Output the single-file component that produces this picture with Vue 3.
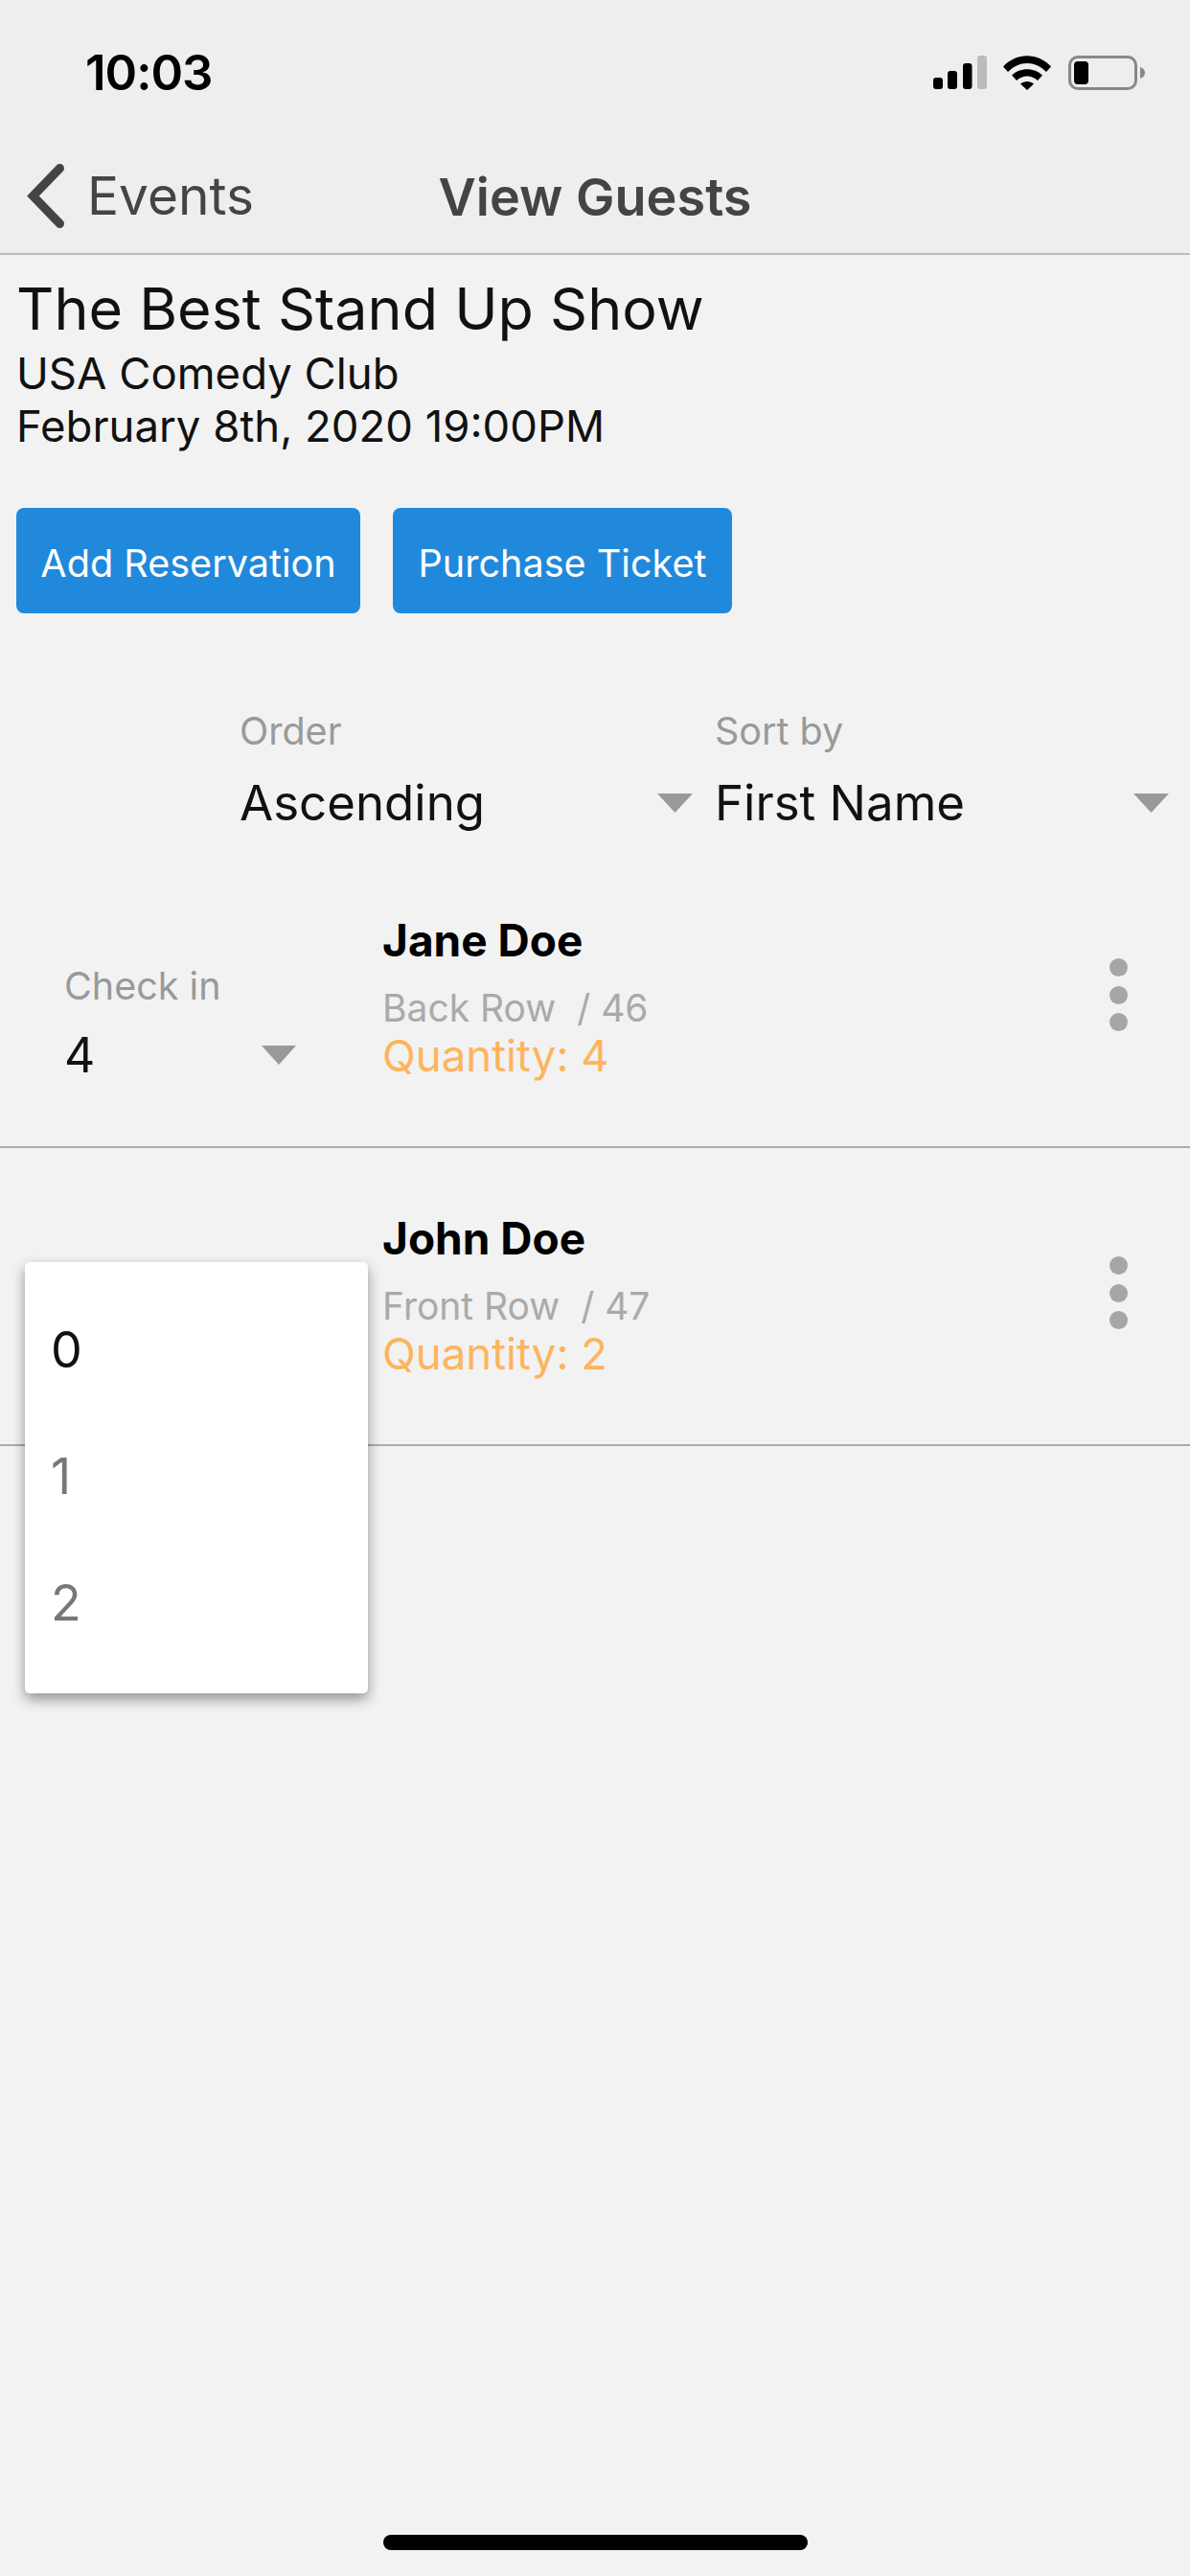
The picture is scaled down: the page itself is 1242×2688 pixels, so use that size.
<template>
  <div class="screen">
    <header class="top">
      <div class="status">
        <span class="time">10:03</span>
        <div class="status-icons">
          <svg class="signal" width="56" height="35" viewBox="0 0 56 35">
            <rect x="0" y="23" width="10" height="12" rx="3" fill="#000" />
            <rect x="15" y="16" width="10" height="19" rx="3" fill="#000" />
            <rect x="31" y="8" width="9.5" height="27" rx="3" fill="#000" />
            <rect x="46" y="0" width="10" height="35" rx="3" fill="#bbb" />
          </svg>
          <svg class="wifi" width="50" height="36" viewBox="0 0 50 36">
            <path d="M0 11.500C14-3.500 36-3.500 50 11.500L45 17C33 5 17 5 5 17Z" fill="#000" />
            <path d="M9 20.500C17.500 12 32.500 12 41 20.500L36 26C29.500 20 20.500 20 14 26Z" fill="#000" />
            <path d="M18 29.500C22 26 28 26 32 29.500L25 36Z" fill="#000" />
          </svg>
          <div class="battery">
            <div class="battery-body"><div class="battery-level"></div></div>
            <svg class="battery-nub" width="5" height="12" viewBox="0 0 5 12"><path d="M0 0C3 1 5 3 5 6C5 9 3 11 0 12Z" fill="#888" /></svg>
          </div>
        </div>
      </div>
      <nav class="nav">
        <div class="back">
          <svg class="chevron" width="42" height="68" viewBox="0 0 42 68">
            <path d="M36.500 5.500L8.400 34.500L36.500 63.500" fill="none" stroke="#444" stroke-width="9" stroke-linecap="round" stroke-linejoin="miter" />
          </svg>
          <span class="back-text">Events</span>
        </div>
        <span class="nav-title">View Guests</span>
      </nav>
    </header>

    <main class="content">
      <section class="event">
        <h1 class="event-name">The Best Stand Up Show</h1>
        <p class="event-line">USA Comedy Club</p>
        <p class="event-line">February 8th, 2020 19:00PM</p>
      </section>

      <div class="actions">
        <button class="btn btn-add">Add Reservation</button>
        <button class="btn btn-buy">Purchase Ticket</button>
      </div>

      <div class="filters">
        <div class="select select-order">
          <span class="select-label">Order</span>
          <div class="select-row">
            <span class="select-value">Ascending</span>
            <svg width="37" height="20" viewBox="0 0 37 20"><path d="M0 0H37L18.500 20Z" fill="#999" /></svg>
          </div>
        </div>
        <div class="select select-sort">
          <span class="select-label">Sort by</span>
          <div class="select-row">
            <span class="select-value">First Name</span>
            <svg width="37" height="20" viewBox="0 0 37 20"><path d="M0 0H37L18.500 20Z" fill="#999" /></svg>
          </div>
        </div>
      </div>

      <div class="guests">
        <div v-for="guest in guests" :key="guest.id" class="guest">
          <div class="checkin">
            <template v-if="guest.showCheckin">
              <span class="checkin-label">Check in</span>
              <div class="checkin-row">
                <span class="checkin-value">{{ guest.checkedIn }}</span>
                <svg width="36" height="20" viewBox="0 0 36 20"><path d="M0 0H36L18 20Z" fill="#999" /></svg>
              </div>
            </template>
          </div>
          <div class="guest-info">
            <span class="guest-name">{{ guest.name }}</span>
            <span class="guest-seat">{{ guest.seat }}&nbsp; / {{ guest.id }}</span>
            <span class="guest-qty">Quantity: {{ guest.quantity }}</span>
          </div>
          <div class="dots"><i></i><i></i><i></i></div>
        </div>
      </div>
    </main>

    <ul class="menu">
      <li v-for="(n, i) in [0, 1, 2]" :key="n" class="menu-item" :class="{ active: i === 0 }">{{ n }}</li>
    </ul>

    <div class="home-bar"></div>
  </div>
</template>

<script setup>
const guests = [
  { id: 46, name: 'Jane Doe', seat: 'Back Row', quantity: 4, checkedIn: 4, showCheckin: true },
  { id: 47, name: 'John Doe', seat: 'Front Row', quantity: 2, checkedIn: 0, showCheckin: false }
]
</script>

<style>
html, body {
  margin: 0;
  background: #f2f2f2;
}
</style>

<style scoped>
.screen {
  position: relative;
  width: 1242px;
  height: 2688px;
  overflow: hidden;
  background: #f2f2f2;
  font-family: Inter, "Liberation Sans", sans-serif;
  color: #111;
}

.top {
  height: 264px;
  background: #eeeeee;
  border-bottom: 2px solid #bdbdbd;
}

.status {
  height: 132px;
  display: flex;
  justify-content: space-between;
  padding: 58px 47px 0 89px;
  box-sizing: border-box;
}

.time {
  font-size: 51px;
  font-weight: 600;
  line-height: 36px;
  color: #000;
  letter-spacing: -1px;
}

.status-icons {
  display: flex;
  align-items: flex-start;
  gap: 17px;
}

.battery {
  display: flex;
  align-items: center;
  gap: 3px;
  margin-left: 1px;
}

.battery-body {
  width: 72px;
  height: 36px;
  box-sizing: border-box;
  border: 3px solid #888;
  border-radius: 10px;
  padding: 3px;
}

.battery-level {
  width: 15px;
  height: 100%;
  background: #000;
  border-radius: 4px;
}

.nav {
  position: relative;
  height: 132px;
  display: flex;
  align-items: center;
  justify-content: center;
}

.back {
  position: absolute;
  left: 26px;
  top: 38px;
  display: flex;
  align-items: center;
  gap: 23px;
}

.back-text {
  font-size: 55px;
  color: #444;
  line-height: 68px;
}

.nav-title {
  font-size: 54px;
  font-weight: 600;
  color: #444;
  margin-top: 14px;
}

.content {
  padding: 0 17px;
}

.event {
  padding-top: 20px;
}

.event-name {
  margin: 0 0 4px;
  font-size: 61px;
  font-weight: 400;
  line-height: 72px;
}

.event-line {
  margin: 0;
  font-size: 45.500px;
  line-height: 55px;
}

.actions {
  display: flex;
  gap: 34px;
  margin-top: 58px;
}

.btn {
  height: 110px;
  border: none;
  border-radius: 8px;
  background: #2089dc;
  color: #fff;
  font-family: inherit;
  font-size: 39.600px;
  padding: 6px 0 0;
}

.btn-add {
  width: 359px;
}

.btn-buy {
  width: 354px;
}

.filters {
  display: flex;
  gap: 23px;
  margin-top: 101px;
  padding-left: 233px;
}

.select {
  display: flex;
  flex-direction: column;
}

.select-order {
  width: 473px;
}

.select-sort {
  width: 474px;
}

.select-label {
  font-size: 39.500px;
  line-height: 44px;
  color: #999;
}

.select-row {
  display: flex;
  justify-content: space-between;
  align-items: center;
  margin-top: 26px;
  height: 54px;
}

.select-value {
  font-size: 51px;
  line-height: 54px;
}

.guests {
  margin: 22px -17px 0;
}

.guest {
  position: relative;
  height: 309px;
  border-bottom: 2px solid #aaa;
  display: flex;
}

.checkin {
  width: 399px;
  box-sizing: border-box;
  padding: 120px 90px 0 67px;
}

.checkin-label {
  font-size: 39.500px;
  line-height: 44px;
  color: #999;
}

.checkin-row {
  display: flex;
  justify-content: space-between;
  align-items: center;
  margin-top: 25px;
}

.checkin-value {
  font-size: 50px;
  line-height: 50px;
}

.guest-info {
  display: flex;
  flex-direction: column;
  padding-top: 66px;
}

.guest-name {
  font-size: 46px;
  font-weight: 700;
  line-height: 56px;
  color: #000;
}

.guest-seat {
  font-size: 39px;
  line-height: 44px;
  color: #aaa;
  margin-top: 21px;
}

.guest-qty {
  font-size: 45.500px;
  line-height: 56px;
  color: #fdb45c;
}

.dots {
  position: absolute;
  left: 1158px;
  top: 113px;
  display: flex;
  flex-direction: column;
  gap: 9.500px;
}

.dots i {
  display: block;
  width: 19px;
  height: 19px;
  border-radius: 50%;
  background: #a6a6a6;
}

.menu {
  position: absolute;
  left: 26px;
  top: 1317px;
  width: 358px;
  height: 450px;
  box-sizing: border-box;
  margin: 0;
  padding: 26px 0;
  list-style: none;
  background: #fff;
  border-radius: 5px;
  box-shadow: 0 6px 14px rgba(0, 0, 0, 0.4);
}

.menu-item {
  height: 132px;
  line-height: 132px;
  padding-left: 27px;
  font-size: 52px;
  color: #777;
}

.menu-item.active {
  color: #111;
}

.home-bar {
  position: absolute;
  left: 400px;
  top: 2645px;
  width: 443px;
  height: 16px;
  border-radius: 8px;
  background: #000;
}
</style>
